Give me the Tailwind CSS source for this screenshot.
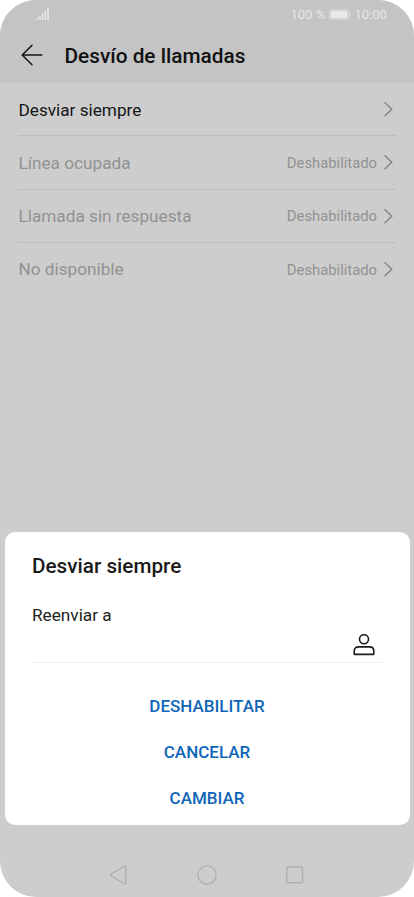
<!DOCTYPE html>
<html lang="es">
<head>
<meta charset="utf-8">
<meta name="viewport" content="width=device-width, initial-scale=1">
<title>Desvío de llamadas</title>
<script src="https://cdn.jsdelivr.net/npm/@tailwindcss/browser@4"></script>
</head>
<body class="bg-white font-['Roboto',sans-serif]">
<div class="w-[414px] h-[897px] rounded-[36px] overflow-hidden bg-[#cdcdcd] flex flex-col">
  <header class="h-[83px] bg-[#c4c4c4] shrink-0">
    <div class="h-7 flex items-center justify-between pl-9 pr-[27.5px] text-[#e7e7e7] text-[13px] leading-7">
      <svg class="w-[13px] h-3" viewBox="0 0 13 12" fill="#e4e4e4"><path d="M0 10.5h1.8V12H0zM2.8 8h1.8v4H2.8zM5.6 5.5h1.8V12H5.6zM8.4 3h1.8v9H8.4zM11.1 0H13v12h-1.9z"/></svg>
      <div class="flex items-center">
        <span class="w-[38px] pt-px whitespace-nowrap">100 %</span>
        <svg class="w-[22px] h-[11px] mr-1" viewBox="0 0 22 11"><rect x=".5" y=".5" width="19" height="10" rx="1.5" fill="#d0d0d0" stroke="#d6d6d6"/><rect x="2" y="2" width="16" height="7" rx=".5" fill="#e9e9e9"/><path d="M20.5 3h1v5h-1z" fill="#e4e4e4"/></svg>
        <span class="w-8 pt-px whitespace-nowrap">10:00</span>
      </div>
    </div>
    <div class="h-[55px] flex items-center pl-[21px]">
      <svg class="w-[22px] h-[22px] mr-[21.5px] mb-px" viewBox="0 0 22 22" fill="none" stroke="#151515" stroke-width="1.5" stroke-linecap="round" stroke-linejoin="round"><path d="M11 1.2 1.2 11 11 20.8M1.2 11h19.6"/></svg>
      <h1 class="text-[20.8px] leading-6 pt-px font-medium text-[#111]">Desvío de llamadas</h1>
    </div>
  </header>
  <main class="px-[18px] h-[449px] shrink-0 text-[#929292]">
    <div class="h-[53px] border-b border-[#bdbdbd] flex items-center justify-between pl-[0.5px] pr-[3px]">
      <span class="text-[17.2px] pt-[3px] text-[#151515]">Desviar siempre</span>
      <svg class="w-[9px] h-[15px]" viewBox="0 0 9 15" fill="none" stroke="#858585" stroke-width="1.5" stroke-linecap="round" stroke-linejoin="round"><path d="m1 .8 6.8 6.5L1 13.8"/></svg>
    </div>
    <div class="h-[54px] border-b border-[#bdbdbd] flex items-center pl-[0.5px] pr-[3px]">
      <span class="text-[17.2px] pt-0.5 mr-auto">Línea ocupada</span>
      <span class="text-[14.8px] pt-0.5 mr-[7px]">Deshabilitado</span>
      <svg class="w-[9px] h-[15px]" viewBox="0 0 9 15" fill="none" stroke="#858585" stroke-width="1.5" stroke-linecap="round" stroke-linejoin="round"><path d="m1 .8 6.8 6.5L1 13.8"/></svg>
    </div>
    <div class="h-[53px] border-b border-[#bdbdbd] flex items-center pl-[0.5px] pr-[3px]">
      <span class="text-[17.2px] pt-0.5 mr-auto">Llamada sin respuesta</span>
      <span class="text-[14.8px] pt-px mr-[7px]">Deshabilitado</span>
      <svg class="w-[9px] h-[15px]" viewBox="0 0 9 15" fill="none" stroke="#858585" stroke-width="1.5" stroke-linecap="round" stroke-linejoin="round"><path d="m1 .8 6.8 6.5L1 13.8"/></svg>
    </div>
    <div class="h-[53px] flex items-center pl-[0.5px] pr-[3px]">
      <span class="text-[17.2px] pt-px mr-auto">No disponible</span>
      <span class="text-[14.8px] pt-px mr-[7px]">Deshabilitado</span>
      <svg class="w-[9px] h-[15px]" viewBox="0 0 9 15" fill="none" stroke="#858585" stroke-width="1.5" stroke-linecap="round" stroke-linejoin="round"><path d="m1 .8 6.8 6.5L1 13.8"/></svg>
    </div>
  </main>
  <section role="dialog" class="mx-auto w-[405px] h-[293px] shrink-0 rounded-[10px] bg-white px-[27.5px] pt-[22px]">
    <h2 class="text-[20.7px] leading-6 font-medium text-[#1a1a1a]">Desviar siempre</h2>
    <p class="mt-[25px] text-[17.2px] leading-6 text-[#222]">Reenviar a</p>
    <div class="h-9 border-b border-[#efefef] flex justify-end pr-[7.5px] pt-[7px]">
      <svg class="w-[22px] h-[22px]" viewBox="0 0 22 22" fill="none" stroke="#1c1c1c" stroke-width="1.6"><circle cx="11" cy="5.2" r="4.5"/><path d="M1.2 19.9v-2.8c0-2.7 1.7-4.2 4.2-4.2h11.2c2.5 0 4.2 1.5 4.2 4.2v2.8q0 .5-.5.5H1.7q-.5 0-.5-.5z" stroke-linejoin="round"/></svg>
    </div>
    <div class="mt-[21px] flex flex-col items-center text-[17px] font-medium text-[#0f66b8]">
      <button class="h-[46px]">DESHABILITAR</button>
      <button class="h-[46px]">CANCELAR</button>
      <button class="h-[46px]">CAMBIAR</button>
    </div>
  </section>
  <nav class="h-[72px] shrink-0 flex items-center pt-[27px] pl-[109px]">
    <svg class="w-[196px] h-5" viewBox="0 0 196 20" fill="none" stroke="#b1b1b1" stroke-width="1.4" stroke-linejoin="round" stroke-linecap="round"><path d="M2 9.2 15.4 1.3q1.3-.7 1.3.7v16q0 1.4-1.3.7L2 10.8q-1.3-.8 0-1.6z"/><circle cx="98" cy="10" r="9.1"/><rect x="177.8" y="2" width="15.7" height="15.7" rx=".5"/></svg>
  </nav>
</div>
</body>
</html>
